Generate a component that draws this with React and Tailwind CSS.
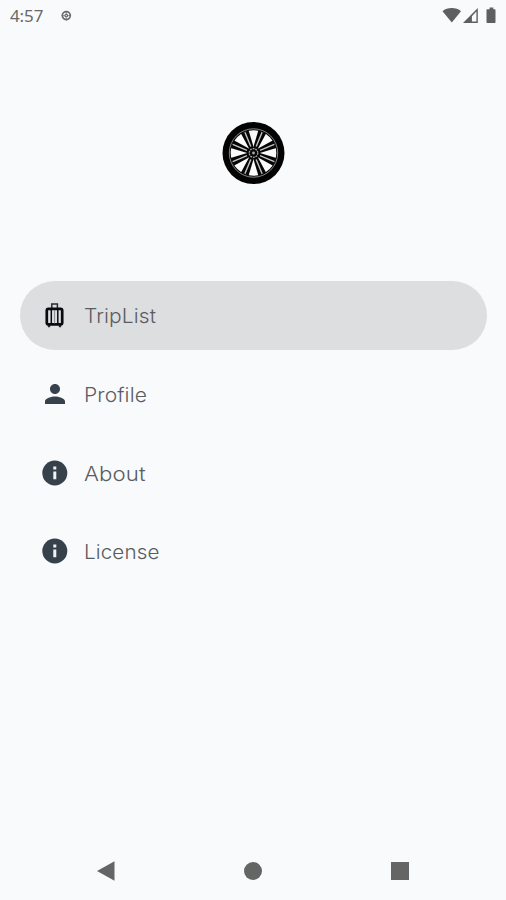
import { MdPerson } from 'react-icons/md';

function StatusBar() {
  return (
    <header className="flex h-8 items-center justify-between pl-[10px] pr-2 text-[#686968]">
      <div className="flex items-center">
        <span className="w-[50px] font-['Noto_Sans',sans-serif] text-[17px] leading-8 tracking-[-0.1px]">
          4:57
        </span>
        <svg viewBox="0 0 12 12" className="h-3 w-3" fill="none" stroke="currentColor">
          <circle cx="6.3" cy="5.6" r="4" strokeWidth="1.7" />
          <circle cx="6.3" cy="5.6" r="1.3" strokeWidth="1.2" />
          <path d="M6.3 1v3M6.3 7.5v3M1.8 5.6h3M7.8 5.6h3" strokeWidth="0.7" />
        </svg>
      </div>
      <svg viewBox="0 0 56 20" className="h-5 w-14" fill="#5e5f5e">
        <path d="M0.5 5.2C5 .9 14.5 .9 19 5.2L9.8 16.6Z" />
        <path d="M21 17 35.8 2v15Zm8.9-1.5h4.5V5.6l-4.5 4.6Z" fillRule="evenodd" />
        <path d="M45.3 3.2h2.3V1.5h3.7v1.7h1.5q.7 0 .7.8v12.2q0 .8-.8.8h-7.4q-.8 0-.8-.8V4q0-.8.8-.8Z" />
      </svg>
    </header>
  );
}

const spokes = [22.5, 67.5, 112.5, 157.5, 202.5, 247.5, 292.5, 337.5];

function WheelLogo() {
  return (
    <svg viewBox="-32.5 -32 64 64" className="h-16 w-16">
      <circle r="31" fill="#030303" />
      <circle r="24.2" fill="none" stroke="#aaa" strokeWidth="0.8" />
      <circle r="22.8" fill="#fbfbfb" />
      {spokes.map((angle) => (
        <g key={angle} transform={`rotate(${angle})`}>
          <path d="M-2.3 -5 -4.2 -23H4.2L2.3 -5Z" fill="#050505" />
          <path d="M0 -7V-22.5" stroke="#c4c4c4" strokeWidth="1.4" />
        </g>
      ))}
      <circle r="6" fill="#080808" />
      <circle r="4.3" fill="none" stroke="#aaa" strokeWidth="1.2" strokeDasharray="1.8 0.9" />
      <circle r="1.4" fill="#aaa" />
    </svg>
  );
}

function LuggageIcon({ className }) {
  return (
    <svg viewBox="0 0 26 26" className={className} fill="none" stroke="currentColor">
      <path d="M9.8 6V2h5.6v4" strokeWidth="1.5" stroke="#292b2e" />
      <rect x="4.8" y="6.8" width="15.4" height="15.6" rx="1.6" strokeWidth="2.7" />
      <path d="M9.3 7v15M15.8 7v15" strokeWidth="1.5" />
      <path d="M12.6 8v13.5" strokeWidth="1" stroke="#85878a" />
      <path d="M6.3 23v1.8h1.4V23M17.3 23v1.8h1.4V23" strokeWidth="1" />
    </svg>
  );
}

function InfoIcon({ className }) {
  return (
    <svg viewBox="0 0 30 30" className={className}>
      <circle cx="14.8" cy="15" r="12.5" fill="currentColor" />
      <path d="M13.3 8.6h3v2.9h-3ZM13.3 13.5h3v7.8h-3Z" fill="#f1f2f4" />
    </svg>
  );
}

const items = [
  { label: 'TripList', icon: LuggageIcon, active: true, iconClass: 'text-[#070a0e]', textClass: 'scale-x-[1.075]' },
  { label: 'Profile', icon: MdPerson, iconClass: 'text-[#36414b]', textClass: 'scale-x-[1.08]' },
  { label: 'About', icon: InfoIcon, iconClass: 'text-[#36414b]', textClass: 'scale-x-[1.14]' },
  { label: 'License', icon: InfoIcon, iconClass: 'text-[#36414b]', textClass: 'scale-x-[1.06]' },
];

function Menu() {
  return (
    <nav className="flex flex-col gap-[10px] pl-5 pr-[19px]">
      {items.map(({ label, icon: Icon, active, iconClass, textClass }) => (
        <button
          key={label}
          className={`flex h-[68.7px] w-full items-center rounded-full pl-[19px] text-left ${active ? 'bg-[#dddee0]' : ''}`}
        >
          <span className="flex w-[45px] pl-[1px]">
            {active ? (
              <Icon className={`ml-[2px] h-[26px] w-[26px] ${iconClass}`} />
            ) : (
              <Icon className={`h-[30px] w-[30px] ${iconClass}`} />
            )}
          </span>
          <span
            className={`origin-left pt-[3px] font-['Inter',sans-serif] text-[19.5px] font-light tracking-[0.1px] text-[#5a5d60] ${textClass}`}
          >
            {label}
          </span>
        </button>
      ))}
    </nav>
  );
}

function NavigationBar() {
  return (
    <footer className="mt-auto flex h-[58px] items-center justify-between px-[97px]">
      <svg viewBox="0 0 18 20" className="h-5 w-[18px]" fill="#646564">
        <path d="M0 10 17.5 0.2v19.6Z" />
      </svg>
      <span className="h-[18px] w-[18px] rounded-full bg-[#646564]" />
      <span className="h-[18px] w-[18px] bg-[#646564]" />
    </footer>
  );
}

function App() {
  return (
    <div className="flex h-[900px] w-[506px] flex-col overflow-hidden bg-[#f9fafc]">
      <StatusBar />
      <div className="flex h-[249px] justify-center pt-[89px]">
        <WheelLogo />
      </div>
      <Menu />
      <NavigationBar />
    </div>
  );
}

export default App;
